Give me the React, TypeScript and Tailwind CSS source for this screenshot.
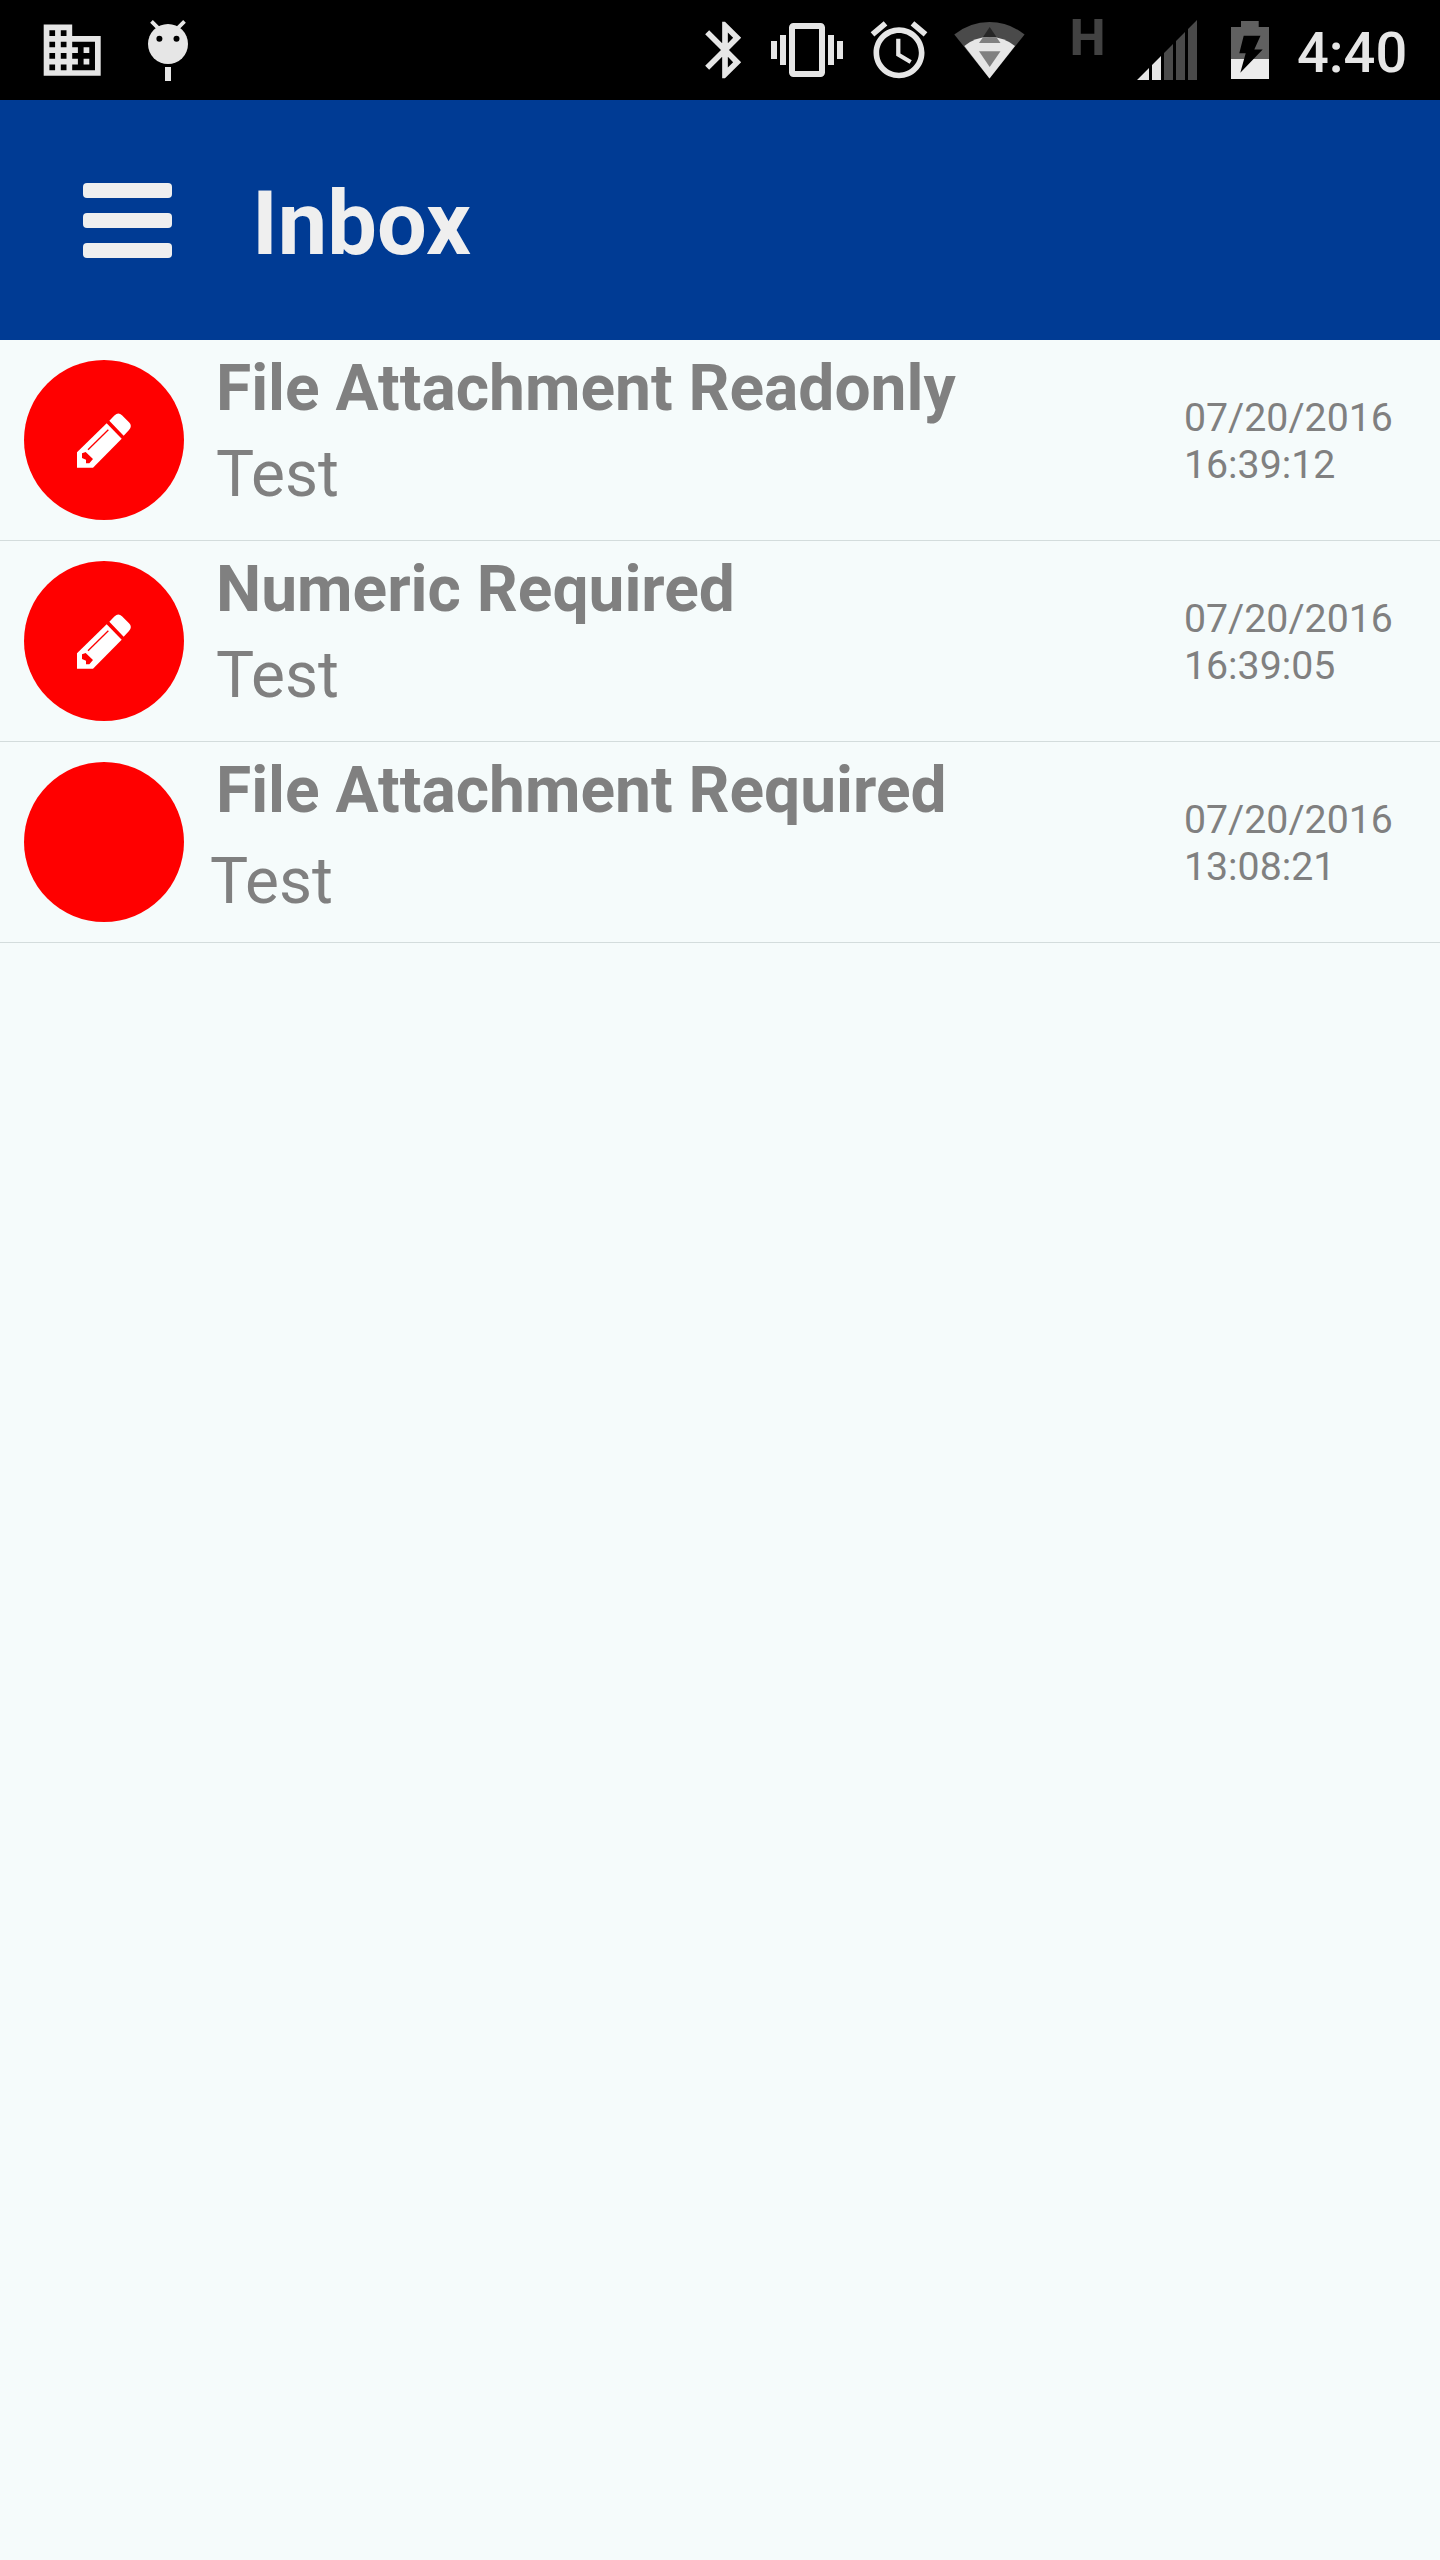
import clsx from 'clsx';

const messages = [
  {
    id: 1,
    title: 'File Attachment Readonly',
    body: 'Test',
    date: '07/20/2016',
    time: '16:39:12',
    editable: true,
  },
  {
    id: 2,
    title: 'Numeric Required',
    body: 'Test',
    date: '07/20/2016',
    time: '16:39:05',
    editable: true,
  },
  {
    id: 3,
    title: 'File Attachment Required',
    body: 'Test',
    date: '07/20/2016',
    time: '13:08:21',
    editable: false,
  },
];

const PencilIcon = () => (
  <svg viewBox="0 0 162 163" className="w-[54px] h-[55px]">
    <path d="M0 163V117L89 30L134 76L48 163Z" fill="#fff" />
    <path d="M97 22L113 6Q124 -5 135 6L156 27Q167 38 156 50L140 67Z" fill="#fff" />
    <path d="M15 120L26 116L48 137L37 150H27V139L15 134Z" fill="#f00" />
    <path d="M33 109L94 49" stroke="#f00" strokeWidth="4" />
  </svg>
);

const StatusBar = () => (
  <div className="flex h-[100px] bg-black text-[#e6e6e6]">
    {/* Notifications */}
    <svg viewBox="0 0 24 24" fill="currentColor" className="ml-[37.6px] mt-[15.5px] size-[68.4px] shrink-0">
      <path d="M12 7V3H2v18h20V7H12zM6 19H4v-2h2v2zm0-4H4v-2h2v2zm0-4H4V9h2v2zm0-4H4V5h2v2zm4 12H8v-2h2v2zm0-4H8v-2h2v2zm0-4H8V9h2v2zm0-4H8V5h2v2zm10 12h-8v-2h2v-2h-2v-2h2v-2h-2V9h8v10zm-2-8h-2v2h2v-2zm0 4h-2v2h2v-2z" />
    </svg>
    <svg viewBox="148 0 40 100" className="ml-[42px] h-[100px] w-[40px] shrink-0">
      <path d="M151.5 21.3L160 29.8M184.5 21.3L176 29.8" stroke="#e6e6e6" strokeWidth="3.8" />
      <circle cx="168" cy="44" r="20" fill="currentColor" />
      <circle cx="159.4" cy="38.7" r="3" fill="#000" />
      <circle cx="176.5" cy="38.7" r="3" fill="#000" />
      <path d="M165 67h6v14h-6z" fill="currentColor" />
    </svg>

    {/* System icons */}
    <svg viewBox="0 0 24 24" fill="currentColor" className="ml-[503.5px] mt-4 size-[68px] shrink-0">
      <path d="M17.71 7.71L12 2h-1v7.59L6.41 5 5 6.41 10.59 12 5 17.59 6.41 19 11 14.41V22h1l5.71-5.71-4.3-4.29 4.3-4.29zM13 5.83l1.88 1.88L13 9.59V5.83zm1.88 10.46L13 18.17v-3.76l1.88 1.88z" />
    </svg>
    <svg viewBox="0 0 24 24" fill="currentColor" className="ml-[11.5px] mt-[14px] size-[72px] shrink-0">
      <path d="M0 15h2V9H0v6zm3 2h2V7H3v10zm19-8v6h2V9h-2zm-3 8h2V7h-2v10zM16.5 3h-9C6.67 3 6 3.67 6 4.5v15c0 .83.67 1.5 1.5 1.5h9c.83 0 1.5-.67 1.5-1.5v-15c0-.83-.67-1.5-1.5-1.5zM16 19H8V5h8v14z" />
    </svg>
    <svg viewBox="0 0 24 24" fill="currentColor" className="ml-[22px] mt-4 size-[68px] shrink-0">
      <path d="M22 5.72l-4.6-3.86-1.29 1.53 4.6 3.86L22 5.72zM7.88 3.39L6.6 1.86 2 5.71l1.29 1.53 4.59-3.85zM12.5 8H11v6l4.75 2.85.75-1.23-4-2.37V8zM12 4c-4.97 0-9 4.03-9 9s4.02 9 9 9c4.97 0 9-4.03 9-9s-4.03-9-9-9zm0 16c-3.87 0-7-3.13-7-7s3.13-7 7-7 7 3.13 7 7-3.13 7-7 7z" />
    </svg>
    <svg viewBox="953 0 73 100" className="ml-[20px] h-[100px] w-[73px] shrink-0">
      <path d="M989.5 78.5L954.3 34.5Q970 22 989.5 22T1024.6 34.5Z" fill="#4a4a4a" />
      <path d="M989.7 27L1000.5 43H979Z" fill="#262626" />
      <path d="M989.5 78.5L964.3 46Q975 37 989.5 37T1015 46Z" fill="#e6e6e6" />
      <path d="M983 37.2Q989.5 36.6 996.5 37.2L1000.5 43H979Z" fill="#808080" />
      <path d="M979 51.3H1000.5L989.7 67Z" fill="#808080" />
    </svg>
    <span className="ml-[43.7px] mt-[7px] w-[36px] text-[50.6px] leading-[61px] font-extrabold text-[#424242]">H</span>
    <svg viewBox="1137 0 60 100" className="ml-[31.3px] h-[100px] w-[60px] shrink-0">
      <path d="M1137 80L1149 68V80ZM1152 80V65L1161 56V80Z" fill="#e6e6e6" />
      <path d="M1164 80V53L1173 44V80ZM1176 80V41L1185 32V80ZM1188 80V29L1197 20V80Z" fill="#4a4a4a" />
    </svg>
    <svg viewBox="1231 0 38 100" className="ml-[34px] h-[100px] w-[38px] shrink-0">
      <path d="M1231 27H1241V21H1258.7V27H1269V59H1231Z" fill="#606060" />
      <path d="M1231 59H1269V79H1231Z" fill="#ececec" />
      <path d="M1243.7 35.7H1260.5L1254.3 49.5H1262.7L1240.3 72.7L1245.7 53.3H1239.3Z" fill="#000" />
    </svg>
    <span className="ml-[28px] mt-[20px] text-[56px] leading-[66px] font-medium">4:40</span>
  </div>
);

const Header = () => (
  <header className="flex h-[240px] bg-[#003b94]">
    <button aria-label="Menu" className="ml-[82.5px] mt-[83px] flex h-[74.5px] w-[89.5px] flex-col justify-between">
      <span className="h-[15px] w-full rounded-[4px] bg-[#efefef]" />
      <span className="h-[15px] w-full rounded-[4px] bg-[#efefef]" />
      <span className="h-[15px] w-full rounded-[4px] bg-[#efefef]" />
    </button>
    <h1 className="ml-[80px] mt-[72px] text-[88.3px] leading-[104px] font-bold text-[#efefef]">Inbox</h1>
  </header>
);

export default function App() {
  return (
    <div className="min-h-[2560px] w-[1440px] overflow-hidden bg-[#f5fbfb] font-['Roboto',sans-serif]">
      <StatusBar />
      <Header />
      <ul>
        {messages.map((message) => (
          <li key={message.id} className="flex h-[201px] border-b border-[#d3dcdc] pl-6 text-[#808080]">
            <div className="mt-5 flex size-40 shrink-0 items-center justify-center rounded-full bg-[#ff0000]">
              {message.editable && <PencilIcon />}
            </div>
            <div className="ml-8 mt-[11px] w-[968px]">
              <h2 className="text-[64.05px] leading-[76px] font-bold">{message.title}</h2>
              <p
                className={clsx(
                  'text-[64px] leading-[76px]',
                  message.editable ? 'mt-[10px]' : '-ml-[6px] mt-[15px]'
                )}
              >
                {message.body}
              </p>
            </div>
            <div className="mt-[55px] text-[39.25px] leading-[47px]">
              <p>{message.date}</p>
              <p>{message.time}</p>
            </div>
          </li>
        ))}
      </ul>
    </div>
  );
}
